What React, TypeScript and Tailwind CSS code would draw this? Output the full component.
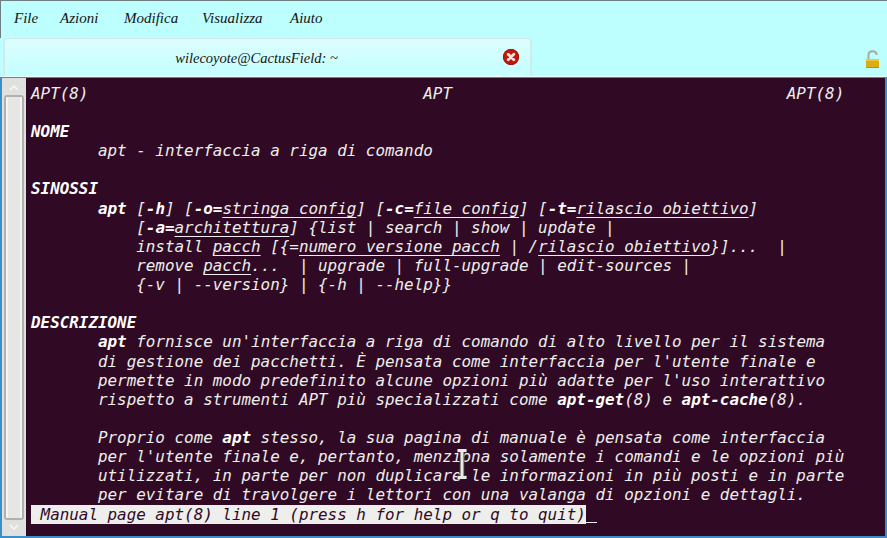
import React from 'react';

const menuItems = [
  { label: 'File', className: 'w-[46px]' },
  { label: 'Azioni', className: 'w-[64px]' },
  { label: 'Modifica', className: 'w-[78px]' },
  { label: 'Visualizza', className: 'w-[88px]' },
  { label: 'Aiuto', className: 'w-[50px]' },
];

// ** = bold, ~~ = underlined, same as what man prints
const lines = [
  'APT(8)                                   APT                                   APT(8)',
  '',
  '**NOME**',
  '       apt - interfaccia a riga di comando',
  '',
  '**SINOSSI**',
  '       **apt** [**-h**] [**-o=**~~stringa_config~~] [**-c=**~~file_config~~] [**-t=**~~rilascio_obiettivo~~]',
  '           [**-a=**~~architettura~~] {list | search | show | update |',
  '           install ~~pacch~~ [{=~~numero_versione_pacch~~ | /~~rilascio_obiettivo~~}]...  |',
  '           remove ~~pacch~~...  | upgrade | full-upgrade | edit-sources |',
  '           {-v | --version} | {-h | --help}}',
  '',
  '**DESCRIZIONE**',
  "       **apt** fornisce un'interfaccia a riga di comando di alto livello per il sistema",
  "       di gestione dei pacchetti. È pensata come interfaccia per l'utente finale e",
  "       permette in modo predefinito alcune opzioni più adatte per l'uso interattivo",
  '       rispetto a strumenti APT più specializzati come **apt-get**(8) e **apt-cache**(8).',
  '',
  '       Proprio come **apt** stesso, la sua pagina di manuale è pensata come interfaccia',
  "       per l'utente finale e, pertanto, menziona solamente i comandi e le opzioni più",
  '       utilizzati, in parte per non duplicare le informazioni in più posti e in parte',
  '       per evitare di travolgere i lettori con una valanga di opzioni e dettagli.',
];

function ManLine({ text }: { text: string }) {
  const parts = text.split(/(\*\*.*?\*\*|~~.*?~~)/);
  return (
    <div className="h-[19.14px] leading-[19.14px] whitespace-pre">
      {parts.map((part, i) => {
        if (part.startsWith('**')) {
          return <b key={i} className="font-bold text-white">{part.slice(2, -2)}</b>;
        }
        if (part.startsWith('~~')) {
          return <span key={i} className="underline underline-offset-[3px] [text-decoration-skip-ink:none]">{part.slice(2, -2)}</span>;
        }
        return <span key={i}>{part}</span>;
      })}
    </div>
  );
}

function CloseIcon() {
  return (
    <svg width="18" height="18" viewBox="0 0 18 18">
      <circle cx="9" cy="9" r="8" fill="#c4160c" />
      <circle cx="9" cy="9" r="7.6" fill="none" stroke="#9a1c10" strokeWidth="1" />
      <path d="M6.2 6.2l5.6 5.6M11.8 6.2l-5.6 5.6" stroke="#fbe4d8" strokeWidth="2.8" strokeLinecap="round" />
    </svg>
  );
}

function LockIcon() {
  return (
    <svg width="15" height="19" viewBox="0 0 15 19">
      <path d="M3.5 9V5C3.5 2.6 5 1.3 7.5 1.3S11.5 2.6 11.8 5" fill="none" stroke="#a4aaa8" strokeWidth="2" />
      <rect x="1" y="9" width="13" height="9" fill="#dcae14" />
      <rect x="1" y="9" width="13" height="2" fill="#e9c83c" />
      <rect x="1" y="17" width="13" height="1" fill="#a98a3a" />
    </svg>
  );
}

function IBeam() {
  return (
    <svg width="14" height="30" viewBox="0 0 14 30">
      <path d="M2 1.5h10M2 28.5h10M7 2v26" stroke="#3a3a3a" strokeWidth="5" fill="none" />
      <path d="M2.5 1.5h9M2.5 28.5h9M7 2v26" stroke="#e9e9e6" strokeWidth="3" fill="none" />
    </svg>
  );
}

function Scrollbar() {
  return (
    <div className="w-[24px] bg-[#e0e0de] flex flex-col items-center shrink-0">
      <svg className="mt-[6px] shrink-0" width="12" height="8" viewBox="0 0 12 8">
        <path d="M2 6l4-4 4 4" fill="none" stroke="#f6f6f4" strokeWidth="1.6" />
      </svg>
      <div className="mt-[3px] w-[20px] h-[425px] rounded-[3px] border-2 border-[#b0b0ae] bg-[#e6e6e4] shadow-[inset_2px_0_0_#f4f4f2,inset_-2px_0_0_#f4f4f2]" />
      <svg className="mt-[3px] shrink-0" width="12" height="8" viewBox="0 0 12 8">
        <path d="M2 2l4 4 4-4" fill="none" stroke="#f6f6f4" strokeWidth="1.6" />
      </svg>
    </div>
  );
}

export default function App() {
  return (
    <div className="relative w-[887px] h-[538px] overflow-hidden flex flex-col bg-[#bdffff] border-t border-[#6f7f7f]">
      <div className="h-[37px] shrink-0 flex items-center pl-[13px] pb-[2px] border-l border-[#6f7f7f] font-['Liberation_Serif',serif] italic text-[15px] text-[#141414]">
        {menuItems.map(item => (
          <span key={item.label} className={item.className}>{item.label}</span>
        ))}
      </div>

      <div className="h-[39px] shrink-0 flex items-stretch pl-[3px] border-b border-[#e8ffff]">
        <div className="relative w-[529px] rounded-t-[4px] border-t border-r-2 border-l-2 border-[#d2eaea] bg-gradient-to-b from-[#dcfdfd] to-[#c4ffff] flex items-center justify-center pr-[22px] pt-[3px] font-['Liberation_Serif',serif] italic text-[14.5px] text-[#141414]">
          wilecoyote@CactusField: ~
          <span className="absolute left-[497px] top-[9px]"><CloseIcon /></span>
        </div>
        <div className="flex-1 flex items-start justify-end pt-[12px] pr-[7px]">
          <LockIcon />
        </div>
      </div>

      <div className="flex-1 min-h-0 flex bg-[#300a24] border-t border-l-2 border-r-2 border-b-2 border-[#3a8fc8]">
        <Scrollbar />
        <div className="flex-1 min-w-0 relative pl-[5px] pt-[5.8px] font-['DejaVu_Sans_Mono',monospace] italic text-[15.9px] text-[#eeeeec]">
          {lines.map((line, i) => (
            <ManLine key={i} text={line} />
          ))}
          <div className="flex items-end h-[19.14px]">
            <div className="h-[19px] leading-[19px] whitespace-pre bg-[#eeeeec] text-[#300a24]"> Manual page apt(8) line 1 (press h for help or q to quit)</div>
            <div className="w-[11px] h-px bg-[#eeeeec] mb-[1px]" />
          </div>
          <span className="absolute left-[429px] top-[371px]"><IBeam /></span>
        </div>
      </div>
    </div>
  );
}
